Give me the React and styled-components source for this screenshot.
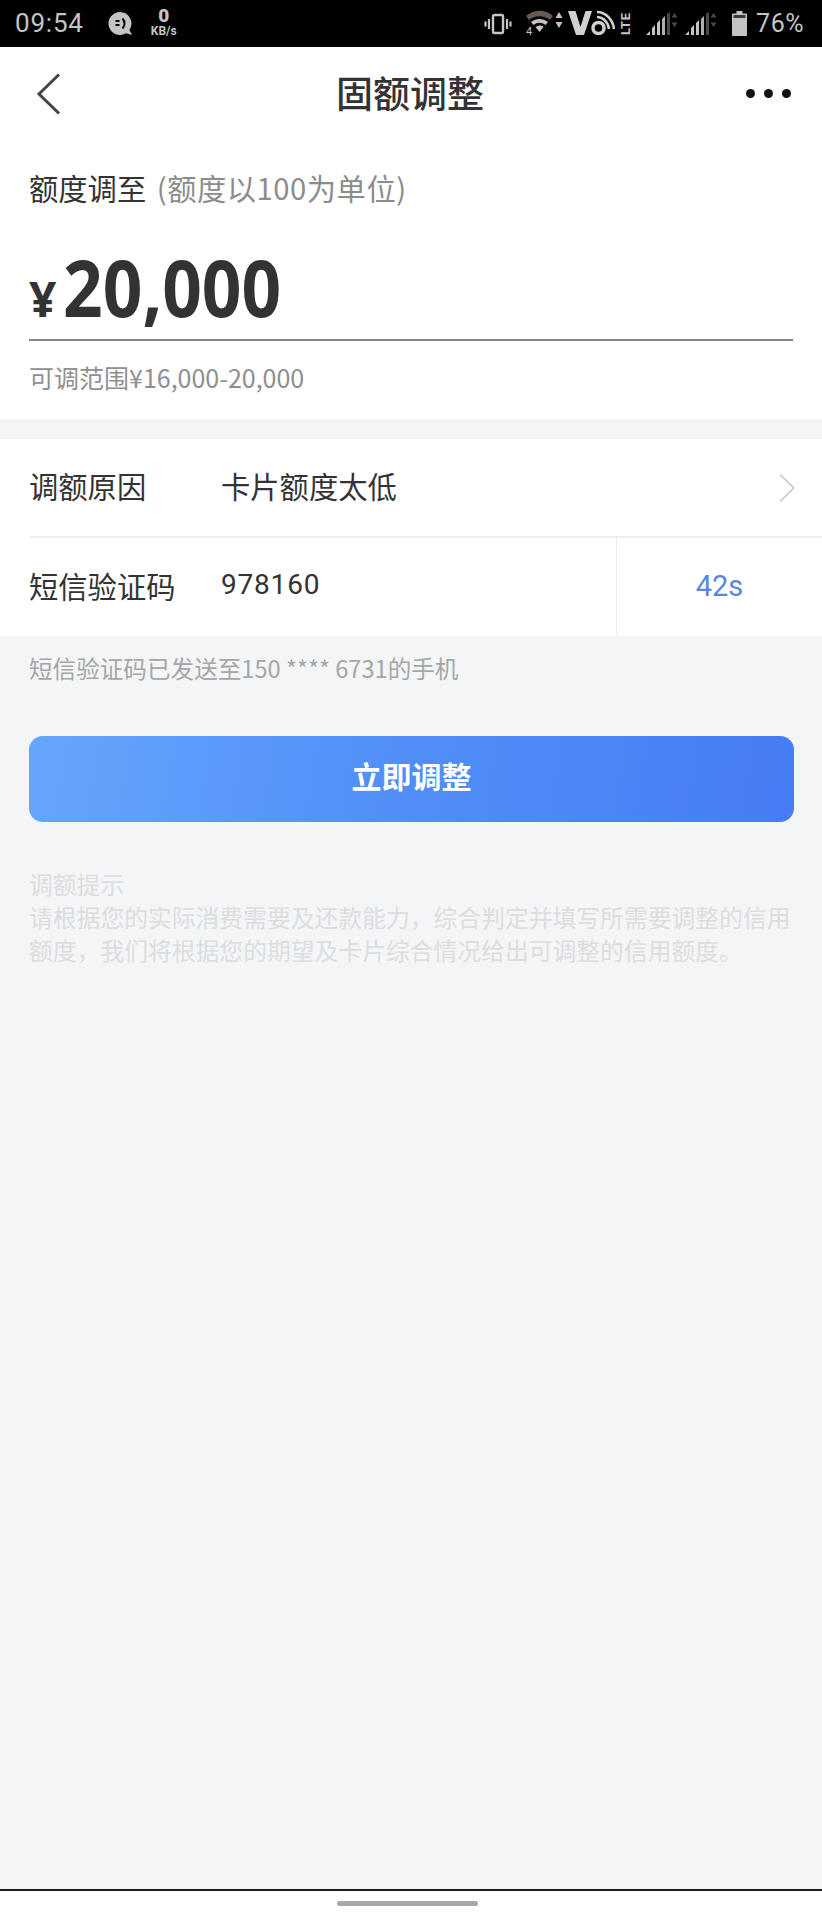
import React from 'react';
import styled, { createGlobalStyle } from 'styled-components';

const GlobalStyle = createGlobalStyle`
  html, body {
    margin: 0;
    padding: 0;
    background: #f4f5f7;
  }
  body {
    font-family: "Noto Sans CJK SC", "Roboto", "Noto Sans", sans-serif;
  }
  * { box-sizing: border-box; }
`;

const Page = styled.div`
  width: 822px;
  height: 1920px;
  display: flex;
  flex-direction: column;
  background: #f4f5f7;
  overflow: hidden;
`;

const StatusBar = styled.div`
  height: 47px;
  flex: none;
  background: #000;
  color: #c4c4c4;
  display: flex;
  align-items: center;
  padding: 0 18px 0 15px;
  font-family: "Roboto", sans-serif;
`;

const Clock = styled.span`
  font-size: 26px;
  line-height: 47px;
  letter-spacing: 0.8px;
  margin-right: 24px;
`;

const Speed = styled.div`
  display: flex;
  flex-direction: column;
  align-items: center;
  margin-left: 17px;
  font-weight: 700;
  font-size: 12px;
  line-height: 12px;
  & b {
    font-size: 19px;
    line-height: 19px;
    margin-top: -4px;
  }
`;

const StatusRight = styled.div`
  margin-left: auto;
  display: flex;
  align-items: center;
  & > svg {
    overflow: visible;
  }
`;

const Battery = styled.span`
  font-size: 25px;
  letter-spacing: 0.5px;
  margin-left: 9px;
`;

const NavBar = styled.div`
  height: 93px;
  flex: none;
  background: #fff;
  display: flex;
  align-items: center;
  justify-content: space-between;
  padding: 0 31px 0 36px;
`;

const NavTitle = styled.h1`
  margin: 0;
  font-size: 37px;
  font-weight: 500;
  color: #333;
  line-height: 1;
  transform: translate(6px, -1px);
`;

const Dots = styled.div`
  display: flex;
  gap: 9px;
`;

const Dot = styled.i`
  width: 9px;
  height: 9px;
  border-radius: 50%;
  background: #111;
`;

const AmountCard = styled.section`
  background: #fff;
  height: 279px;
  flex: none;
  padding: 0 29px;
`;

const AmountLabel = styled.div`
  font-size: 29.3px;
  line-height: 40px;
  padding-top: 27px;
  height: 69px;
  color: #333;
  & span {
    color: #8c8c8c;
    letter-spacing: 0.5px;
    margin-left: 4px;
  }
`;

const AmountRow = styled.div`
  height: 132px;
  border-bottom: 2px solid #858585;
  display: flex;
  align-items: baseline;
  font-family: "Open Sans", "Noto Sans", sans-serif;
  font-weight: 700;
  color: #333;
  padding-top: 28px;
`;

const Yen = styled.span`
  font-size: 48px;
  line-height: 100px;
  margin-right: 7px;
`;

const AmountValue = styled.span`
  font-size: 78px;
  line-height: 100px;
  transform: scaleX(0.89);
  transform-origin: left center;
`;

const RangeHint = styled.div`
  font-size: 25px;
  line-height: 34px;
  margin-top: 19px;
  color: #8f8f8f;
`;

const FormCard = styled.section`
  margin-top: 20px;
  background: #fff;
  flex: none;
`;

const Row = styled.div`
  height: ${p => p.$height}px;
  display: flex;
  align-items: center;
  padding-left: 29px;
  font-size: 29.3px;
  color: #333;
`;

const Divider = styled.div`
  height: 2px;
  margin-left: 29px;
  background: #efefef;
`;

const RowLabel = styled.span`
  width: 192px;
  flex: none;
  margin-bottom: 5px;
`;

const RowValue = styled.span`
  flex: 1;
  margin-bottom: 5px;
  font-family: ${p => (p.$digits ? '"Roboto", sans-serif' : 'inherit')};
  font-size: ${p => (p.$digits ? '28px' : 'inherit')};
  letter-spacing: ${p => (p.$digits ? '0.8px' : '0')};
`;

const Chevron = styled.svg`
  width: 18px;
  height: 30px;
  margin-right: 26px;
`;

const Countdown = styled.div`
  width: 206px;
  height: 100%;
  flex: none;
  border-left: 1px solid #ececec;
  display: flex;
  align-items: center;
  justify-content: center;
  padding-bottom: 2px;
  color: #5b86dc;
  font-family: "Roboto", sans-serif;
  font-size: 29px;
`;

const SmsNote = styled.p`
  margin: 14px 0 0;
  padding-left: 29px;
  font-size: 23.6px;
  line-height: 36px;
  color: #a6a6a6;
`;

const SubmitButton = styled.button`
  display: block;
  margin: 50px 28px 0 29px;
  padding: 0 0 8px;
  height: 86px;
  flex: none;
  border: 0;
  border-radius: 14px;
  background: linear-gradient(100deg, #65a6fd 0%, #5190f7 45%, #467cf5 100%);
  color: #fff;
  font-family: inherit;
  font-size: 30px;
  font-weight: 700;
`;

const Tips = styled.div`
  margin-top: 45px;
  padding: 0 29px;
  font-size: 23.8px;
  line-height: 33px;
  color: #dcdddf;
`;

const Spacer = styled.div`
  flex: 1;
`;

const BottomBar = styled.div`
  height: 31px;
  flex: none;
  background: #fff;
  border-top: 2px solid #1c1c1c;
  display: flex;
  justify-content: center;
  padding: 10px 7px 0 0;
`;

const HomeIndicator = styled.div`
  width: 141px;
  height: 5px;
  border-radius: 3px;
  background: #a8a8a8;
`;

const ChatIcon = () => (
  <svg width="26" height="26" viewBox="0 0 26 26">
    <path d="M12 1a11.5 11.5 0 1 0 6 21.3l6 1.7-2.6-5A11.5 11.5 0 0 0 12 1z" fill="#c4c4c4" />
    <path d="M7.5 10h4M7.5 14h4" stroke="#000" strokeWidth="1.8" />
    <path d="M14.5 7.5c2.5 3 2.5 7 0 10" stroke="#000" strokeWidth="2" fill="none" />
  </svg>
);

const VibrateIcon = () => (
  <svg width="28" height="22" viewBox="0 0 28 22" fill="none" stroke="#c4c4c4" style={{ marginRight: 14 }}>
    <rect x="9" y="2" width="10" height="18" rx="1.5" strokeWidth="2.4" />
    <path d="M5 6v10M1.5 8.5v5M23 6v10M26.5 8.5v5" strokeWidth="2.2" />
  </svg>
);

const WifiIcon = () => (
  <svg width="37" height="26" viewBox="0 0 37 26" style={{ marginRight: 7 }}>
    <path d="M0 5c8-7 20-7 27 0l-3 4C18 4 9 4 3 9z" fill="#6b5656" />
    <path d="M5 11c5-4 12-4 17 0l-2.500 3c-4-3-8-3-12 0z" fill="#c4c4c4" />
    <path d="M9.500 16c3-2 6-2 8 0l-4 5z" fill="#c4c4c4" />
    <path d="M33 1l3.500 6h-7zM33 17l-3.500-6h7z" fill="#c4c4c4" />
    <text x="0" y="24" fontSize="11" fill="#c4c4c4" fontFamily="Roboto">4</text>
  </svg>
);

const VolteIcon = () => (
  <svg width="61" height="26" viewBox="0 0 61 26" fill="none" style={{ marginRight: 14 }}>
    <path d="M-2 0h7.500l5 16L15.500 0H22L14 24H6z" fill="#d0d0d0" />
    <circle cx="28.500" cy="17" r="5.500" stroke="#d0d0d0" strokeWidth="3.500" />
    <path d="M27 6c6 0 11 5 12 12M27 1c9 0 16 8 17 17" stroke="#d0d0d0" strokeWidth="2.600" />
    <text x="0" y="0" transform="translate(60 24) rotate(-90)" fontSize="13" fontWeight="700" fill="#c4c4c4" fontFamily="Roboto" letterSpacing="0.5">LTE</text>
  </svg>
);

const SignalIcon = ({ gap }) => (
  <svg width="33" height="26" viewBox="0 0 33 26" style={{ marginRight: gap }}>
    <path d="M1 24l4-4v4z" fill="#c4c4c4" />
    <path d="M7 24v-7l3-3v10z" fill="#c4c4c4" />
    <path d="M12 24V12l3-3v15z" fill="#c4c4c4" />
    <path d="M17 24V8l3-3v19z" fill="#b0b0b0" />
    <path d="M22 24V3l3-2v23z" fill="#4a4a4a" />
    <path d="M29.500 2l3 4.500h-6zM29.500 16l-3-4.500h6z" fill="#4a4a4a" />
  </svg>
);

const BatteryIcon = () => (
  <svg width="15" height="25" viewBox="0 0 15 25">
    <path d="M4.500 0h6v2.500H14a1 1 0 0 1 1 1V24a1 1 0 0 1-1 1H1a1 1 0 0 1-1-1V3.500a1 1 0 0 1 1-1h3.500z" fill="#c4c4c4" />
    <rect x="1.500" y="4" width="12" height="3" fill="#3a3a3a" />
  </svg>
);

const BackIcon = () => (
  <svg width="26" height="44" viewBox="0 0 26 44" fill="none">
    <path d="M23 2.500L3 22l20 19.500" stroke="#444" strokeWidth="3" />
  </svg>
);

const App = () => (
  <>
    <GlobalStyle />
    <Page>
      <StatusBar>
        <Clock>09:54</Clock>
        <ChatIcon />
        <Speed>
          <b>0</b>
          KB/s
        </Speed>
        <StatusRight>
          <VibrateIcon />
          <WifiIcon />
          <VolteIcon />
          <SignalIcon gap={6} />
          <SignalIcon gap={15} />
          <BatteryIcon />
          <Battery>76%</Battery>
        </StatusRight>
      </StatusBar>

      <NavBar>
        <BackIcon />
        <NavTitle>固额调整</NavTitle>
        <Dots>
          <Dot />
          <Dot />
          <Dot />
        </Dots>
      </NavBar>

      <AmountCard>
        <AmountLabel>
          额度调至 <span>(额度以100为单位)</span>
        </AmountLabel>
        <AmountRow>
          <Yen>¥</Yen>
          <AmountValue>20,000</AmountValue>
        </AmountRow>
        <RangeHint>可调范围¥16,000-20,000</RangeHint>
      </AmountCard>

      <FormCard>
        <Row $height={97}>
          <RowLabel>调额原因</RowLabel>
          <RowValue>卡片额度太低</RowValue>
          <Chevron viewBox="0 0 18 30" fill="none">
            <path d="M2 1.500L16 15 2 28.500" stroke="#cfcfcf" strokeWidth="1.800" />
          </Chevron>
        </Row>
        <Divider />
        <Row $height={98}>
          <RowLabel>短信验证码</RowLabel>
          <RowValue $digits>978160</RowValue>
          <Countdown>42s</Countdown>
        </Row>
      </FormCard>

      <SmsNote>短信验证码已发送至150 **** 6731的手机</SmsNote>

      <SubmitButton>立即调整</SubmitButton>

      <Tips>
        调额提示
        <br />
        请根据您的实际消费需要及还款能力，综合判定并填写所需要调整的信用额度，我们将根据您的期望及卡片综合情况给出可调整的信用额度。
      </Tips>

      <Spacer />

      <BottomBar>
        <HomeIndicator />
      </BottomBar>
    </Page>
  </>
);

export default App;
